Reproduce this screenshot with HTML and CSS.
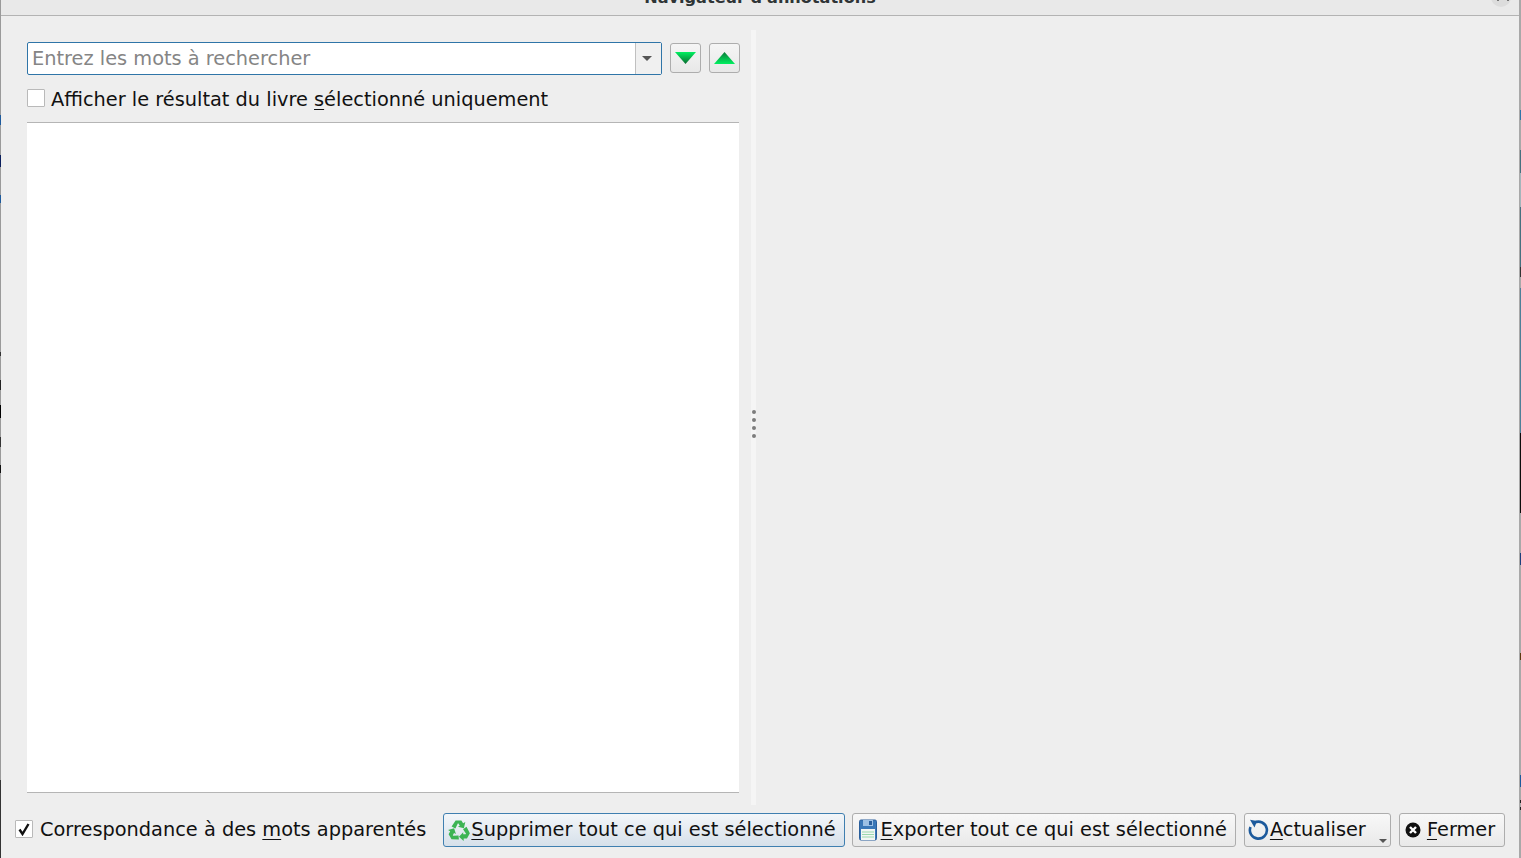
FILE: index.html
```html
<!DOCTYPE html>
<html lang="fr">
<head>
<meta charset="utf-8">
<title>Navigateur d'annotations</title>
<link rel="stylesheet" href="styles.css">
</head>
<body>
<div class="window">
  <header class="titlebar">
    <span class="title">Navigateur d'annotations</span>
    <span class="win-btn"></span>
  </header>
  <main class="content">
    <section class="left">
      <div class="search-row">
        <div class="combo">
          <span class="placeholder">Entrez les mots à rechercher</span>
          <span class="combo-arrow"><i class="caret"></i></span>
        </div>
        <button class="nav-btn nav-down"><svg width="21" height="12" viewBox="0 0 21 12"><defs><linearGradient id="gd" x1="0" y1="0" x2="0" y2="1"><stop offset="0" stop-color="#00f060"/><stop offset="1" stop-color="#0a6a30"/></linearGradient></defs><path d="M0 0H21L10.500 12Z" fill="url(#gd)"/></svg></button>
        <button class="nav-btn nav-up"><svg width="21" height="12" viewBox="0 0 21 12"><defs><linearGradient id="gu" x1="0" y1="0" x2="0" y2="1"><stop offset="0" stop-color="#0a7a38"/><stop offset="1" stop-color="#00f060"/></linearGradient></defs><path d="M0 12H21L10.500 0Z" fill="url(#gu)"/></svg></button>
      </div>
      <label class="check-row">
        <span class="check"></span>
        <span class="check-label">Afficher le résultat du livre <u>s</u>électionné uniquement</span>
      </label>
      <div class="list"></div>
    </section>
    <div class="splitter"><i></i><i></i><i></i><i></i></div>
    <section class="right"></section>
  </main>
  <footer class="footer">
    <label class="match">
      <span class="check"><svg width="14" height="14" viewBox="0 0 14 14"><path d="M2.500 7.500 5.500 12 11.500 2" fill="none" stroke="#111" stroke-width="2.400"/></svg></span>
      <span>Correspondance à des <u>m</u>ots apparentés</span>
    </label>
    <button class="btn btn-default btn-delete">
      <svg class="ico" width="22" height="22" viewBox="0 0 22 22"><g fill="#3cb454"><path d="M3.600 7.600 7.600 1.400H13.400L15.100 4.200 17.300 3 15.900 9.200 9.900 7.800 11.800 6.700 10.500 4.600H9.800L7.400 9.400Z"/><path d="M3.600 7.600 7.600 1.400H13.400L15.100 4.200 17.300 3 15.900 9.200 9.900 7.800 11.800 6.700 10.500 4.600H9.800L7.400 9.400Z" transform="rotate(120 11 12)"/><path d="M3.600 7.600 7.600 1.400H13.400L15.100 4.200 17.300 3 15.900 9.200 9.900 7.800 11.800 6.700 10.500 4.600H9.800L7.400 9.400Z" transform="rotate(240 11 12)"/></g></svg>
      <span><u>S</u>upprimer tout ce qui est sélectionné</span>
    </button>
    <button class="btn btn-export">
      <svg class="ico" width="18" height="22" viewBox="0 0 18 22"><rect x="0.500" y="1" width="17" height="20" rx="1.500" fill="#3a78b8" stroke="#2a5f9c"/><rect x="4" y="1" width="10" height="6" fill="#9cc0e4"/><rect x="10" y="2" width="3" height="4" fill="#2a5f9c"/><rect x="2" y="10" width="14" height="11" fill="#f2f6f4"/><path d="M3 13H15M3 15.500H15M3 18H15" stroke="#9ad8ac"/></svg>
      <span><u>E</u>xporter tout ce qui est sélectionné</span>
    </button>
    <button class="btn btn-refresh">
      <svg class="ico" width="21" height="21" viewBox="0 0 21 21"><path d="M6.500 3.600A8.500 8.500 0 1 1 2.500 8" fill="none" stroke="#1d5a9c" stroke-width="2.600"/><path d="M2 .8 9 2 6.500 8.500Z" fill="#1d5a9c"/></svg>
      <span><u>A</u>ctualiser</span>
      <i class="caret small"></i>
    </button>
    <button class="btn btn-close">
      <svg class="ico" width="16" height="16" viewBox="0 0 16 16"><circle cx="8" cy="8" r="7.500" fill="#111"/><path d="M5 5 11 11M11 5 5 11" stroke="#fff" stroke-width="2.400"/></svg>
      <span><u>F</u>ermer</span>
    </button>
  </footer>
</div>
<div class="edge edge-left"></div>
<div class="edge edge-right"></div>
</body>
</html>
```

FILE: styles.css
```css
* { box-sizing: border-box; }
html, body { margin: 0; height: 100%; }
body {
  font-family: "DejaVu Sans", sans-serif;
  font-size: 19.35px;
  color: #111;
  background: #eeeeee;
  overflow: hidden;
  position: relative;
}
u { text-underline-offset: 3px; text-decoration-thickness: 1px; }
.window {
  height: 858px;
  display: flex;
  flex-direction: column;
  border-left: 1px solid #9a9a9a;
  border-right: 2px solid #a8a8a8;
}
.edge { position: absolute; top: 0; bottom: 0; width: 1px; }
.edge-left {
  left: 0;
  background: linear-gradient(#9a9a9a 0 115px, #1d5a9c 115px 125px, #9a9a9a 125px 155px, #0a1e5c 155px 167px, #9a9a9a 167px 195px, #1d5a9c 195px 203px, #9a9a9a 203px 352px, #333 352px 356px, #9a9a9a 356px 380px, #222 380px 390px, #9a9a9a 390px 405px, #000 405px 418px, #9a9a9a 418px 437px, #333 437px 447px, #9a9a9a 447px 465px, #111 465px 473px, #9a9a9a 473px 780px, #333 780px);
}
.edge-right {
  right: 0;
  background: linear-gradient(#a8a8a8 0 110px, #2f75a8 110px 120px, #a8a8a8 120px 150px, #45707f 150px 173px, #a3b5bb 173px 207px, #45707f 207px 267px, #333 267px 277px, #a8a8a8 277px 288px, #4d7f98 288px 433px, #0c0c0c 433px 513px, #a8a8a8 513px 553px, #1d3f7c 553px 565px, #a8a8a8 565px 653px, #5a3a10 653px 660px, #a8a8a8 660px 775px, #1d5a9c 775px 787px, #a8a8a8 787px 800px, #222 800px 803px, #a8a8a8 803px 807px, #222 807px 810px, #a8a8a8 810px);
}
.titlebar {
  height: 16px;
  flex: none;
  background: #e9e9e9;
  border-bottom: 1px solid #b3b3b3;
  position: relative;
  overflow: hidden;
  display: flex;
  justify-content: center;
  align-items: flex-end;
}
.title {
  font-weight: bold;
  font-size: 16.1px;
  color: #2e3436;
  line-height: 20px;
  padding-bottom: 7px;
}
.win-btn {
  position: absolute;
  right: 8px;
  top: -13px;
  width: 20px;
  height: 20px;
  border-radius: 50%;
  background: #dcdcdc;
}
.win-btn::after {
  content: "";
  position: absolute;
  left: 6px;
  bottom: 6px;
  width: 8px;
  height: 2px;
  border-left: 2px solid #777;
  border-right: 2px solid #777;
}
.content {
  flex: 1;
  min-height: 0;
  display: flex;
  padding: 14px 0 0 26px;
}
.left {
  width: 713px;
  flex: none;
  display: flex;
  flex-direction: column;
  padding-top: 12px;
  height: 763px;
}
.search-row { display: flex; align-items: center; height: 32px; }
.combo {
  width: 635px;
  height: 33px;
  border: 1px solid #2f75a8;
  border-radius: 2px;
  background: #fff;
  display: flex;
  align-items: stretch;
}
.placeholder { flex: 1; color: #858585; padding-left: 4px; line-height: 31px; }
.combo-arrow {
  width: 26px;
  border-left: 1px solid #c0c0c0;
  background: #f0f0f0;
  padding-right: 3px;
  display: flex;
  align-items: center;
  justify-content: center;
}
.caret {
  display: block;
  width: 0;
  height: 0;
  border-left: 5px solid transparent;
  border-right: 5px solid transparent;
  border-top: 5px solid #555;
}
.nav-btn {
  width: 31px;
  height: 30px;
  margin-left: 8px;
  padding: 0;
  border: 1px solid #adadad;
  border-radius: 3px;
  background: linear-gradient(#f5f5f5, #e8e8e8);
  display: flex;
  align-items: center;
  justify-content: center;
}
.check-row { display: flex; align-items: center; gap: 6px; margin-top: 14px; height: 20px; }
.check-label { padding-top: 2px; }
.check {
  width: 18px;
  height: 18px;
  flex: none;
  border: 1px solid #b9b9b9;
  background: #fff;
  border-radius: 1px;
  display: flex;
  align-items: center;
  justify-content: center;
}
.list {
  flex: 1;
  margin-top: 14px;
  margin-right: 1px;
  background: #fff;
  border-top: 1px solid #b5b5b5;
  border-bottom: 1px solid #b5b5b5;
}
.splitter {
  width: 5px;
  flex: none;
  margin-left: 11px;
  height: 775px;
  padding-top: 12px;
  background: #f5f5f5;
  display: flex;
  flex-direction: column;
  align-items: center;
  justify-content: center;
  gap: 4px;
}
.splitter i { width: 4px; height: 4px; border-radius: 50%; background: #7d7d7d; }
.right { flex: 1; }
.footer {
  flex: none;
  height: 45px;
  display: flex;
  align-items: flex-start;
  padding-left: 14px;
}
.match { display: flex; align-items: center; gap: 7px; height: 32px; margin-right: 17px; white-space: nowrap; }
.btn {
  height: 34px;
  margin-right: 8px;
  padding: 0 8px 0 6px;
  border: 1px solid #adadad;
  border-radius: 3px;
  background: linear-gradient(#f8f8f8, #e9e9e9);
  font: inherit;
  color: #111;
  display: flex;
  align-items: center;
  white-space: nowrap;
  position: relative;
}
.btn span { position: relative; top: -1px; }
.btn-default {
  border-color: #3f7fb0;
  background: linear-gradient(#f3f6f9, #d6e0ea);
  padding: 0 8px 0 4px;
  margin-right: 7px;
}
.btn-default .ico { margin-right: 1px; }
.btn-export .ico { margin-right: 4px; }
.btn-refresh { width: 147px; padding-left: 3px; }
.btn-refresh .ico { margin: -2px 1px 0 0; }
.caret.small { position: absolute; right: 3px; bottom: 3px; border-left-width: 4px; border-right-width: 4px; border-top-width: 4px; }
.btn-close { padding: 0 9px 0 5px; }
.btn-close .ico { margin-right: 6px; }
```
